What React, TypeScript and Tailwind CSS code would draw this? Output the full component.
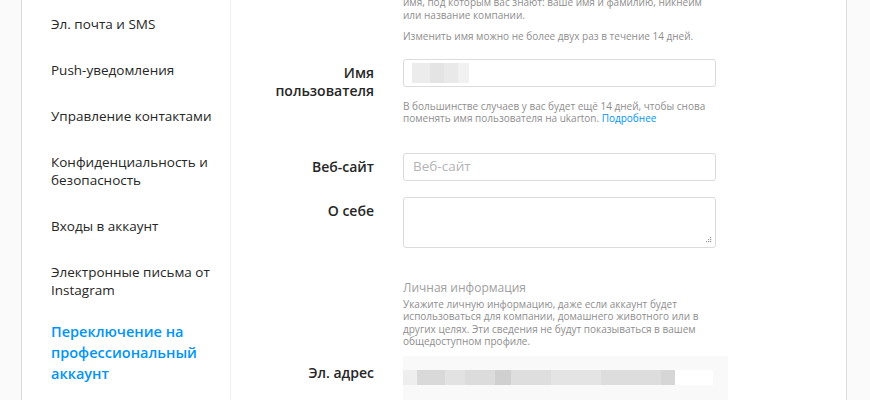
const menu = [
  ['Эл. почта и SMS'],
  ['Push-уведомления'],
  ['Управление контактами'],
  ['Конфиденциальность и', 'безопасность'],
  ['Входы в аккаунт'],
  ['Электронные письма от', 'Instagram'],
]

const Label = ({ children, className = '' }: { children: React.ReactNode; className?: string }) => (
  <div className={`w-[143px] shrink-0 text-right text-[14px] font-semibold leading-[18px] text-[#262626] ${className}`}>
    {children}
  </div>
)

// help text with fixed line breaks as in the settings page
const Help = ({ lines, className = '' }: { lines: React.ReactNode[]; className?: string }) => (
  <div className={`whitespace-nowrap text-[10px] leading-[12.5px] text-[#8e8e8e] ${className}`}>
    {lines.map((l, i) => (
      <div key={i}>{l}</div>
    ))}
  </div>
)

export default function App() {
  return (
    <div className="flex h-[400px] w-[870px] overflow-hidden bg-[#fafafa] font-['Open_Sans',sans-serif]">
      <div className="w-[21px] shrink-0" />
      <div className="flex w-[826px] shrink-0 border-x border-[#dbdbdb] bg-white">
        {/* sidebar */}
        <div className="w-[209px] shrink-0 border-r border-[#efefef]">
          <ul className="mt-[1px] pl-[29px] text-[13.5px] leading-[18px] text-[#262626]">
            {menu.map((lines) => (
              <li key={lines[0]} className="py-[14px]">
                {lines.map((l) => (
                  <div key={l}>{l}</div>
                ))}
              </li>
            ))}
            <li className="pt-[8px] text-[14.5px] font-semibold leading-[21px] text-[#0095f6]">
              <div>Переключение на</div>
              <div>профессиональный</div>
              <div>аккаунт</div>
            </li>
          </ul>
        </div>

        {/* main form */}
        <div className="flex-1">
          <div className="mt-[-4px] flex gap-[29px]">
            <div className="w-[143px] shrink-0" />
            <div className="w-[313px]">
              <Help lines={['имя, под которым вас знают: ваше имя и фамилию, никнейм', 'или название компании.']} />
              <Help className="mt-[9px]" lines={['Изменить имя можно не более двух раз в течение 14 дней.']} />
            </div>
          </div>

          <div className="mt-[16px] flex gap-[29px]">
            <Label className="pt-[5px]">
              <div>Имя</div>
              <div>пользователя</div>
            </Label>
            <div className="w-[313px]">
              <div className="flex h-[28px] items-center rounded-[3px] border border-[#dbdbdb] bg-white px-[8px]">
                <div className="flex h-[20px]">
                  <div className="w-[18px] bg-[#ececec]" />
                  <div className="w-[14px] bg-[#e4e4e4]" />
                  <div className="w-[14px] bg-[#e9e9e9]" />
                  <div className="w-[11px] bg-[#f1f1f1]" />
                </div>
              </div>
              <Help
                className="mt-[13px]"
                lines={[
                  'В большинстве случаев у вас будет ещё 14 дней, чтобы снова',
                  <>
                    поменять имя пользователя на ukarton. <span className="text-[#0095f6]">Подробнее</span>
                  </>,
                ]}
              />
            </div>
          </div>

          <div className="mt-[28px] flex gap-[29px]">
            <Label className="pt-[5px]">Веб-сайт</Label>
            <div className="flex h-[28px] w-[313px] items-center rounded-[3px] border border-[#dbdbdb] px-[9px] text-[13.5px] text-[#b4b4b4]">
              Веб-сайт
            </div>
          </div>

          <div className="mt-[16px] flex gap-[29px]">
            <Label className="pt-[5px]">О себе</Label>
            <div className="relative h-[51px] w-[313px] rounded-[3px] border border-[#dbdbdb]">
              <svg className="absolute bottom-[3px] right-[3px]" width="7" height="7" viewBox="0 0 7 7">
                <g fill="#9a9a9a">
                  <rect x="5" y="0" width="1.2" height="1.2" />
                  <rect x="3" y="2" width="1.2" height="1.2" />
                  <rect x="5" y="2" width="1.2" height="1.2" />
                  <rect x="1" y="4" width="1.2" height="1.2" />
                  <rect x="3" y="4" width="1.2" height="1.2" />
                  <rect x="5" y="4" width="1.2" height="1.2" />
                </g>
              </svg>
            </div>
          </div>

          <div className="mt-[32px] flex gap-[29px]">
            <div className="w-[143px] shrink-0" />
            <div className="w-[313px]">
              <p className="text-[12px] font-medium leading-[16px] text-[#a0a0a0]">Личная информация</p>
              <Help
                className="mt-[2px]"
                lines={[
                  'Укажите личную информацию, даже если аккаунт будет',
                  'использоваться для компании, домашнего животного или в',
                  'других целях. Эти сведения не будут показываться в вашем',
                  'общедоступном профиле.',
                ]}
              />
            </div>
          </div>

          <div className="mt-[8px] flex gap-[29px]">
            <Label className="pt-[8px]">Эл. адрес</Label>
            <div className="h-[50px] w-[325px] bg-[#f9f9f9] pt-[14px]">
              <div className="flex h-[15px] w-[310px] bg-white">
                <div className="w-[14px] bg-[#eeeeee]" />
                <div className="w-[28px] bg-[#d9d9d9]" />
                <div className="w-[20px] bg-[#e2e2e2]" />
                <div className="w-[30px] bg-[#dcdcdc]" />
                <div className="w-[16px] bg-[#d0d0d0]" />
                <div className="w-[40px] bg-[#dedede]" />
                <div className="w-[50px] bg-[#e4e4e4]" />
                <div className="w-[60px] bg-[#dddddd]" />
                <div className="w-[14px] bg-[#d6d6d6]" />
              </div>
            </div>
          </div>
        </div>
      </div>
    </div>
  )
}
